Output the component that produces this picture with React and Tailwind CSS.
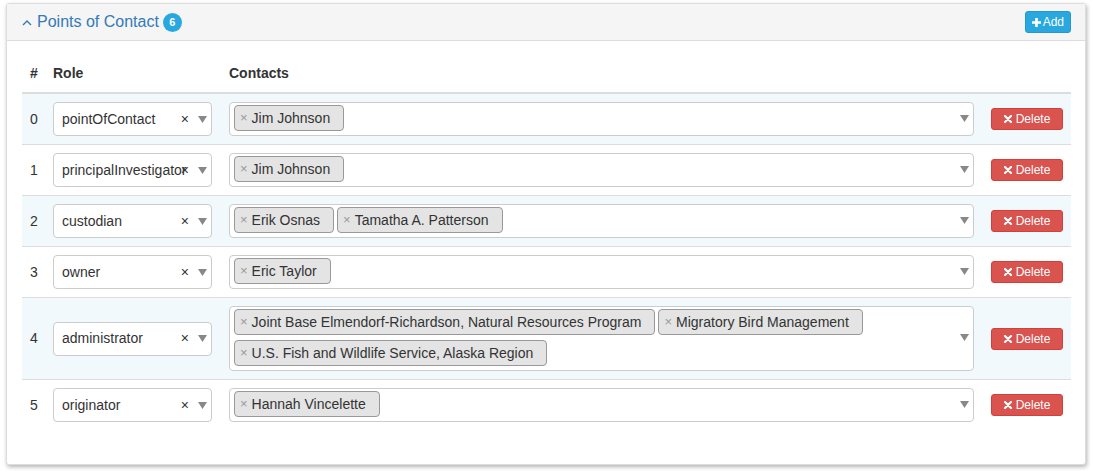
import React from 'react';

const rows = [
  { role: 'pointOfContact', contacts: ['Jim Johnson'] },
  { role: 'principalInvestigator', contacts: ['Jim Johnson'] },
  { role: 'custodian', contacts: ['Erik Osnas', 'Tamatha A. Patterson'] },
  { role: 'owner', contacts: ['Eric Taylor'] },
  {
    role: 'administrator',
    contacts: [
      'Joint Base Elmendorf-Richardson, Natural Resources Program',
      'Migratory Bird Management',
      'U.S. Fish and Wildlife Service, Alaska Region',
    ],
  },
  { role: 'originator', contacts: ['Hannah Vincelette'] },
];

const Caret = () => (
  <svg width="9" height="7" viewBox="0 0 9 7" className="shrink-0">
    <path d="M0 0 L9 0 L4.5 7 Z" fill="#888" />
  </svg>
);

const Tag = ({ label }) => (
  <div className="flex items-center h-[26px] pl-[5px] pr-[13px] bg-[#e4e4e4] border border-[#999] rounded-[4px] text-[14px] text-[#333] whitespace-nowrap">
    <span className="text-[#999] text-[13px] mr-[4px]">×</span>
    <span>{label}</span>
  </div>
);

const App = () => {
  return (
    <div className="bg-white w-[1093px] h-[471px] pt-[3px] pl-[6px] font-['Liberation_Sans',Arial,sans-serif] text-[#333]">
      <div className="w-[1080px] h-[462px] border border-[#ddd] rounded-[3px] shadow-[1px_2px_4px_rgba(0,0,0,0.3)] bg-white">
        {/* Header */}
        <div className="h-[37px] bg-[#f5f5f5] border-b border-[#ddd] flex items-center justify-between pl-[15px] pr-[14px]">
          <div className="flex items-center">
            <svg width="10" height="7" viewBox="0 0 10 7" className="mr-[5px] mt-[1px]">
              <path d="M1 6 L5 2 L9 6" fill="none" stroke="#337ab7" strokeWidth="1.4" />
            </svg>
            <span className="text-[16px] text-[#337ab7]">Points of Contact</span>
            <span className="ml-[4px] w-[19px] h-[19px] rounded-full bg-[#29a8e0] text-white text-[11px] font-bold flex items-center justify-center">6</span>
          </div>
          <button className="h-[22px] px-[6px] rounded-[3px] bg-[#29a8e0] border border-[#2399cf] text-white text-[12px] flex items-center gap-[2px]">
            <svg width="9" height="9" viewBox="0 0 9 9">
              <path d="M3.2 0 H5.8 V3.2 H9 V5.8 H5.8 V9 H3.2 V5.8 H0 V3.2 H3.2 Z" fill="white" />
            </svg>
            <span>Add</span>
          </button>
        </div>

        {/* Table */}
        <div className="px-[15px] pt-[14px]">
          <table className="w-[1049px] table-fixed border-collapse text-[14px]">
            <thead>
              <tr className="border-b-2 border-[#ddd]">
                <th className="w-[23px] text-left font-bold pl-[8px] pr-0 py-[8px] h-[36px]">#</th>
                <th className="w-[176px] text-left font-bold px-[8px]">Role</th>
                <th className="text-left font-bold px-[8px]">Contacts</th>
                <th className="w-[89px]"></th>
              </tr>
            </thead>
            <tbody>
              {rows.map((r, i) => (
                <tr
                  key={i}
                  className={`${i < rows.length - 1 ? 'border-b border-[#ddd]' : ''} ${i % 2 === 0 ? 'bg-[#f2f9fc]' : 'bg-white'}`}
                >
                  <td className="pl-[8px] pr-0 py-[8px] align-middle">{i}</td>
                  <td className="px-[8px] py-[8px] align-middle">
                    <div className="h-[34px] w-[159px] bg-white border border-[#ccc] rounded-[4px] flex items-center pl-[8px] pr-[4px]">
                      <span className="flex-1 overflow-hidden whitespace-nowrap text-[14px]">{r.role}</span>
                      <span className="text-[14px] text-[#333] -ml-[10px] mr-[9px] relative">×</span>
                      <Caret />
                    </div>
                  </td>
                  <td className="px-[8px] py-[8px] align-middle">
                    <div className="min-h-[34px] bg-white border border-[#ccc] rounded-[4px] flex items-center pl-[4px] pr-[4px] pt-[2px] pb-[4px]">
                      <div className="flex-1 flex flex-wrap gap-x-[3px] gap-y-[5px]">
                        {r.contacts.map((c) => (
                          <Tag key={c} label={c} />
                        ))}
                      </div>
                      <Caret />
                    </div>
                  </td>
                  <td className="pl-[9px] pr-[8px] align-middle">
                    <button className="h-[22px] w-[72px] rounded-[3px] bg-[#d9534f] border border-[#d43f3a] text-white text-[12px] flex items-center justify-center gap-[4px]">
                      <svg width="8" height="8" viewBox="0 0 8 8">
                        <path d="M1 1 L7 7 M7 1 L1 7" stroke="white" strokeWidth="2.2" strokeLinecap="round" />
                      </svg>
                      <span>Delete</span>
                    </button>
                  </td>
                </tr>
              ))}
            </tbody>
          </table>
        </div>
      </div>
    </div>
  );
};

export default App;
